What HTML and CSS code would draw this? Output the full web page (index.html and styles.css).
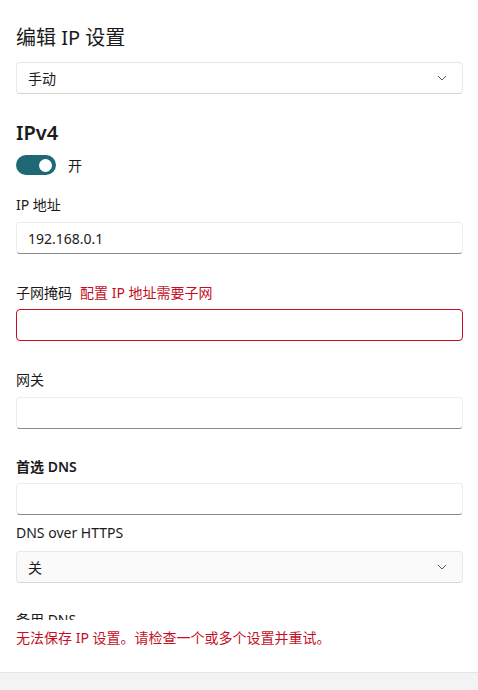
FILE: index.html
```html
<!DOCTYPE html>
<html lang="zh-CN">
<head>
<meta charset="utf-8">
<title>编辑 IP 设置</title>
<link rel="stylesheet" href="styles.css">
</head>
<body>
<div class="dialog">
  <div class="scroll">
    <h1 class="title">编辑 IP 设置</h1>
    <div class="select mt-10">
      <span>手动</span>
      <svg class="chev" width="10" height="6" viewBox="0 0 10 6"><path d="M1 1 L5 5 L9 1" fill="none" stroke="#5c5c5c" stroke-width="1"/></svg>
    </div>

    <h2 class="section">IPv4</h2>
    <div class="toggle-row">
      <span class="toggle"><span class="knob"></span></span>
      <span class="toggle-label">开</span>
    </div>

    <label class="label mt-20">IP 地址</label>
    <div class="input mt-7">192.168.0.1</div>

    <label class="label mt-29">子网掩码<span class="err-inline">配置 IP 地址需要子网</span></label>
    <div class="input error mt-6"></div>

    <label class="label mt-29">网关</label>
    <div class="input mt-7"></div>

    <label class="label strong mt-28">首选 DNS</label>
    <div class="input mt-6"></div>

    <label class="label mt-8">DNS over HTTPS</label>
    <div class="select grey mt-8">
      <span>关</span>
      <svg class="chev" width="10" height="6" viewBox="0 0 10 6"><path d="M1 1 L5 5 L9 1" fill="none" stroke="#5c5c5c" stroke-width="1"/></svg>
    </div>

    <label class="label mt-27">备用 DNS</label>
  </div>
  <p class="save-error">无法保存 IP 设置。请检查一个或多个设置并重试。</p>
  <div class="footer"></div>
</div>
</body>
</html>
```

FILE: styles.css
```css
html, body {
  margin: 0;
  padding: 0;
  background: #ffffff;
}
body {
  font-family: "Noto Sans", "Noto Sans CJK SC", sans-serif;
  color: #1b1b1b;
  font-size: 14px;
}
.dialog {
  width: 478px;
  height: 690px;
  display: flex;
  flex-direction: column;
}
.dialog > * {
  flex-shrink: 0;
}
.scroll {
  height: 620px;
  overflow: hidden;
  padding: 0 15px 0 16px;
  display: flex;
  flex-direction: column;
}
.scroll > * {
  flex-shrink: 0;
}
.title {
  margin: 24px 0 0;
  font-size: 20px;
  line-height: 28px;
  font-weight: 400;
}
.section {
  margin: 25px 0 0;
  font-size: 20px;
  line-height: 28px;
  font-weight: 600;
}
.select {
  height: 32px;
  box-sizing: border-box;
  border: 1px solid #e8e8e8;
  border-bottom-color: #d6d6d6;
  border-radius: 4px;
  background: #fefefe;
  display: flex;
  align-items: center;
  justify-content: space-between;
  padding: 0 15px 0 11px;
  font-size: 14px;
}
.select.grey {
  background: #fafafa;
}
.chev {
  display: block;
}
.toggle-row {
  margin-top: 8px;
  display: flex;
  align-items: center;
  height: 20px;
}
.toggle {
  width: 40px;
  height: 20px;
  border-radius: 10px;
  background: #1e6975;
  display: flex;
  align-items: center;
  justify-content: flex-end;
  padding-right: 4px;
  box-sizing: border-box;
}
.knob {
  width: 13px;
  height: 13px;
  border-radius: 50%;
  background: #ffffff;
}
.toggle-label {
  margin-left: 12px;
  font-size: 14px;
}
.label {
  display: block;
  font-size: 14px;
  line-height: 20px;
  height: 20px;
}
.label.strong {
  font-weight: 600;
}
.err-inline {
  color: #c50f1f;
  margin-left: 8px;
}
.input {
  height: 32px;
  box-sizing: border-box;
  border: 1px solid #ececec;
  border-bottom: 1px solid #8a8a8a;
  border-radius: 4px;
  background: #ffffff;
  padding: 0 11px;
  display: flex;
  align-items: center;
  font-size: 14px;
}
.input.error {
  border: 1px solid #c50f1f;
}
.mt-6 { margin-top: 6px; }
.mt-7 { margin-top: 7px; }
.mt-8 { margin-top: 8px; }
.mt-10 { margin-top: 10px; }
.mt-20 { margin-top: 20px; }
.mt-27 { margin-top: 27px; }
.mt-28 { margin-top: 28px; }
.mt-29 { margin-top: 29px; }
.save-error {
  margin: 8px 0 0;
  padding: 0 16px;
  color: #c50f1f;
  font-size: 14px;
  line-height: 20px;
  height: 20px;
}
.footer {
  margin-top: 24px;
  flex: 1;
  background: #f3f3f3;
  border-top: 1px solid #e5e5e5;
}
```
